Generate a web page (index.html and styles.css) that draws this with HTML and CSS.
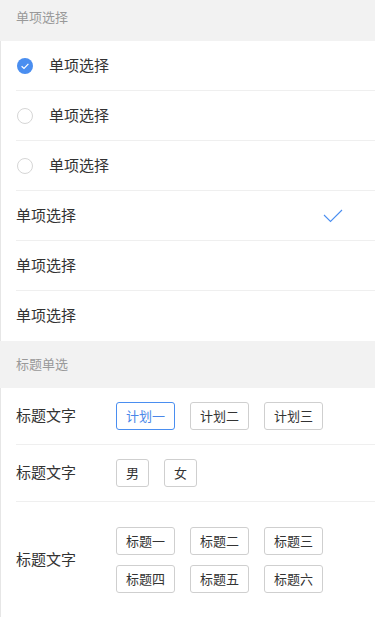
FILE: index.html
```html
<!DOCTYPE html>
<html lang="zh-CN">
<head>
    <meta charset="UTF-8">
    <meta name="viewport" content="width=device-width, initial-scale=1.0">
    <title>单项选择</title>
    <link rel="stylesheet" href="styles.css">
</head>
<body>
    <!-- 单项选择 -->
    <div class="group-title first">单项选择</div>
    <div class="group">
        <div class="cell">
            <span class="radio checked">
                <svg width="16" height="16" viewBox="0 0 16 16"><path d="M4.6 8.2 L7 10.4 L11.4 5.8" fill="none" stroke="#fff" stroke-width="1.2"/></svg>
            </span>
            <span class="cell-text">单项选择</span>
        </div>
        <div class="cell">
            <span class="radio"></span>
            <span class="cell-text">单项选择</span>
        </div>
        <div class="cell">
            <span class="radio"></span>
            <span class="cell-text">单项选择</span>
        </div>
        <div class="cell">
            <span class="cell-label">单项选择</span>
            <svg class="tick" width="20" height="14" viewBox="0 0 20 14"><path d="M1 6 L7.5 12.5 L19 1" fill="none" stroke="#4a8ef0" stroke-width="1.1"/></svg>
        </div>
        <div class="cell">
            <span class="cell-label">单项选择</span>
        </div>
        <div class="cell last">
            <span class="cell-label">单项选择</span>
        </div>
    </div>

    <!-- 标题单选 -->
    <div class="group-title">标题单选</div>
    <div class="group">
        <div class="form-row">
            <span class="form-label">标题文字</span>
            <div class="tags">
                <span class="tag active">计划一</span>
                <span class="tag">计划二</span>
                <span class="tag">计划三</span>
            </div>
        </div>
        <div class="form-row">
            <span class="form-label">标题文字</span>
            <div class="tags">
                <span class="tag">男</span>
                <span class="tag">女</span>
            </div>
        </div>
        <div class="form-row wide last">
            <span class="form-label">标题文字</span>
            <div class="tags">
                <span class="tag">标题一</span>
                <span class="tag">标题二</span>
                <span class="tag">标题三</span>
                <span class="tag">标题四</span>
                <span class="tag">标题五</span>
                <span class="tag">标题六</span>
            </div>
        </div>
    </div>
</body>
</html>
```

FILE: styles.css
```css
body {
    margin: 0;
    background: #fff;
    font-family: "Noto Sans CJK SC", "Noto Sans", sans-serif;
    color: #333;
}
.group-title {
    background: #f2f2f2;
    color: #999;
    font-size: 13px;
    height: 47px;
    line-height: 46px;
    padding-left: 16px;
}
.group-title.first {
    height: 41px;
    line-height: 34px;
}
.group {
    border-left: 1px solid #e6e6e6;
}
.cell {
    display: flex;
    align-items: center;
    height: 49px;
    margin-left: 15px;
    padding-right: 32px;
    border-bottom: 1px solid #efefef;
    font-size: 15px;
    line-height: 20px;
}
.cell.last {
    border-bottom: none;
    height: 50px;
}
.cell-text,
.cell-label {
    padding-bottom: 2px;
}
.radio {
    width: 14px;
    height: 14px;
    border: 1px solid #d6d6d6;
    border-radius: 50%;
    margin-left: 1px;
    margin-right: 16px;
    display: flex;
    align-items: center;
    justify-content: center;
}
.radio.checked {
    width: 16px;
    height: 16px;
    border: none;
    background: #4a8ef0;
}
.radio.checked svg {
    display: block;
}
.cell-label {
    flex: 1;
}
.tick {
    display: block;
}
.form-row {
    display: flex;
    align-items: center;
    margin-left: 15px;
    padding: 14px 0 14px;
    border-bottom: 1px solid #efefef;
}
.form-row.wide {
    padding: 25px 0 24px;
}
.form-row.last {
    border-bottom: none;
}
.form-label {
    width: 100px;
    flex-shrink: 0;
    font-size: 15px;
    line-height: 20px;
    padding-bottom: 2px;
}
.tags {
    display: flex;
    flex-wrap: wrap;
    gap: 10px 15px;
    width: 230px;
}
.tag {
    display: inline-block;
    height: 26px;
    line-height: 26px;
    padding: 0 9px;
    border: 1px solid #cfcfcf;
    border-radius: 3px;
    font-size: 13px;
    color: #333;
}
.tag.active {
    border-color: #4a8ef0;
    color: #4a86e8;
}
```
